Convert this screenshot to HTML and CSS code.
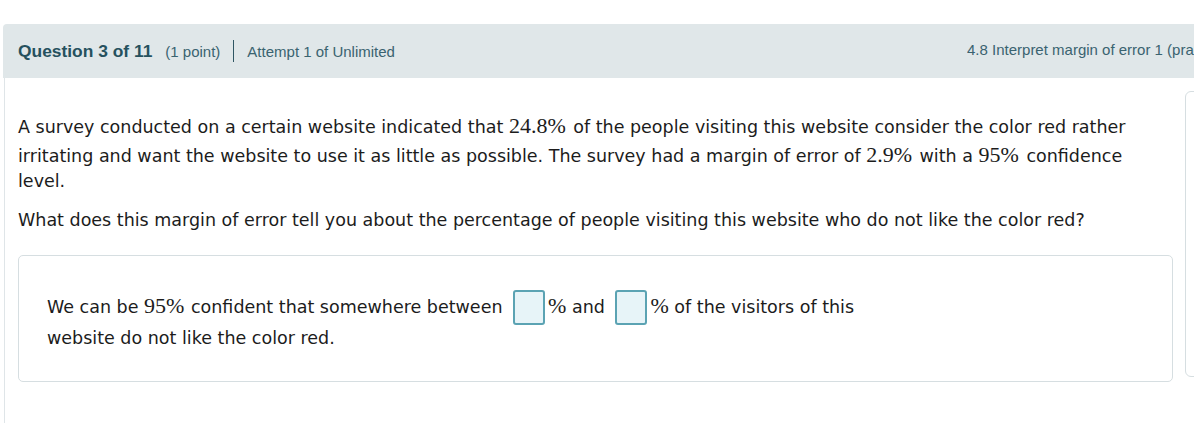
FILE: index.html
```html
<!DOCTYPE html>
<html lang="en">
<head>
<meta charset="utf-8">
<title>Question 3 of 11</title>
<link rel="stylesheet" href="styles.css">
</head>
<body>
<div class="page">
  <div class="qhead">
    <div class="qhead-left">
      <span class="qtitle">Question 3 of 11</span>
      <span class="qpoints">(1 point)</span>
      <span class="qdivider"></span>
      <span class="qattempt">Attempt 1 of Unlimited</span>
    </div>
    <div class="qhead-right">4.8 Interpret margin of error 1 (practice)</div>
  </div>
  <div class="qbody">
    <div class="qmain">
      <p class="para">A survey conducted on a certain website indicated that <span class="m num">24.8%</span> of the people visiting this website consider the color red rather irritating and want the website to use it as little as possible. The survey had a margin of error of <span class="m num">2.9%</span> with a <span class="m num">95%</span> confidence level.</p>
      <p class="para">What does this margin of error tell you about the percentage of people visiting this website who do not like the color red?</p>
      <div class="answer">
        <p class="answer-text">We can be <span class="m num">95%</span> confident that somewhere between <span class="blank"></span><span class="m">%</span> and <span class="blank"></span><span class="m">%</span> of the visitors of this website do not like the color red.</p>
      </div>
    </div>
    <div class="side">
      <div class="side-row"></div>
      <div class="side-row"></div>
      <div class="side-row"></div>
      <div class="side-row"></div>
      <div class="side-row"></div>
      <div class="side-row"></div>
    </div>
  </div>
</div>
</body>
</html>
```

FILE: styles.css
```css
html, body {
  margin: 0;
  padding: 0;
  background: #ffffff;
}

.page {
  padding-top: 24px;
  padding-left: 3px;
  overflow: hidden;
  width: 1191px;
  height: 399px;
}

.qhead {
  display: flex;
  align-items: center;
  height: 54px;
  width: 1191px;
  box-sizing: border-box;
  background: #e0e7e9;
  border-top-left-radius: 4px;
  padding-left: 15px;
  white-space: nowrap;
  overflow: hidden;
  font-family: "Liberation Sans", Arial, sans-serif;
  color: #3a6370;
}

.qhead-left {
  display: flex;
  align-items: center;
}

.qtitle {
  font-size: 17.4px;
  font-weight: bold;
  color: #26515e;
}

.qpoints {
  font-size: 15px;
  margin-left: 13px;
}

.qdivider {
  display: inline-block;
  width: 1px;
  height: 22px;
  background: #2f5663;
  margin: 0 13px 0 13px;
}

.qattempt {
  font-size: 15px;
}

.qhead-right {
  font-size: 15px;
  flex: none;
  margin-left: auto;
  width: 227px;
  overflow: hidden;
  padding-bottom: 4px;
}

.qbody {
  display: flex;
  margin-left: 1px;
  border-left: 1px solid #dfe5e8;
  padding-left: 13px;
  height: 345px;
}

.qmain {
  flex: none;
  width: 1155px;
  padding-top: 33px;
  font-family: "DejaVu Sans", Verdana, sans-serif;
  font-size: 17.5px;
  color: #1c1c1c;
}

.para {
  margin: 0 0 14px 0;
  line-height: 25px;
}

.m {
  font-family: "Liberation Serif", "Times New Roman", serif;
  font-size: 22px;
  display: inline-block;
  line-height: 20px;
  padding-top: 5px;
}

.num {
  padding-right: 2px;
}

.answer {
  margin-top: 22px;
  border: 1px solid #d6dee1;
  border-radius: 5px;
  padding: 36px 28px 26px 28px;
  height: 127px;
  box-sizing: border-box;
}

.answer-text {
  margin: 0;
  width: 850px;
  line-height: 31px;
}

.answer-text .m {
  padding-top: 0;
}

.answer-text .num {
  padding-right: 1px;
}

.blank {
  display: inline-block;
  width: 28px;
  height: 31px;
  border: 2px solid #5ba3b3;
  border-radius: 3px;
  background: #e7f4f8;
  vertical-align: middle;
  margin: -4px 3px -4px 5px;
  position: relative;
  top: -1px;
}

.side {
  flex: none;
  margin-left: 12px;
  margin-top: 13px;
  width: 60px;
  height: 286px;
  border: 1px solid #d6dee1;
  border-radius: 6px;
  display: flex;
  flex-direction: column;
  box-sizing: border-box;
}

.side-row {
  flex: 1;
  border-bottom: 1px solid #e0e6e8;
  margin-left: 8px;
}

.side-row:last-child {
  border-bottom: none;
}
```
